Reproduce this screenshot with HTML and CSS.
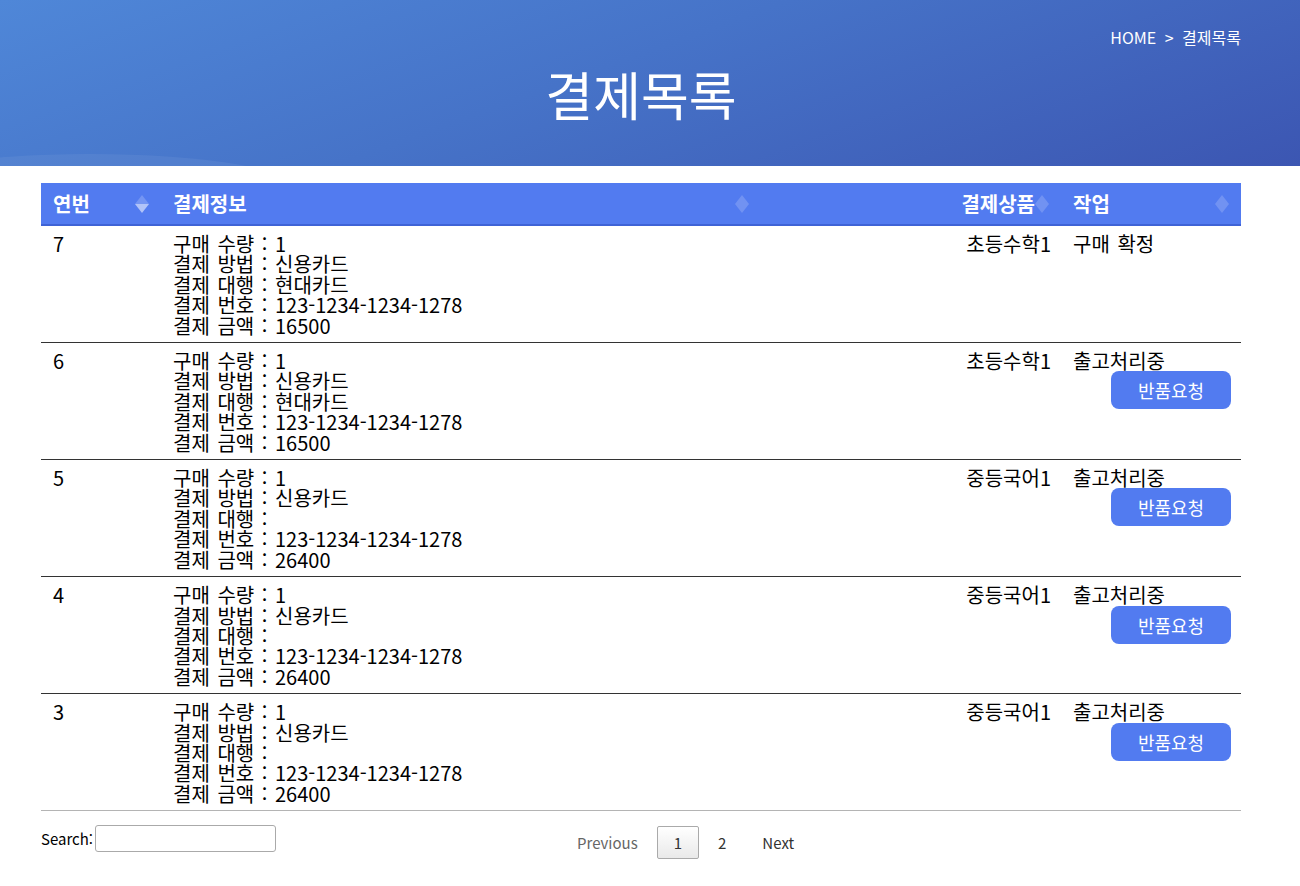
FILE: index.html
```html
<!DOCTYPE html>
<html lang="ko">
<head>
<meta charset="utf-8">
<title>결제목록</title>
<link rel="stylesheet" href="styles.css">
</head>
<body>
<header class="banner">
  <div class="crumb">HOME <span class="sep">&gt;</span> 결제목록</div>
  <h1 class="title">결제목록</h1>
</header>

<main class="wrap">
  <table class="list">
    <colgroup>
      <col class="c1"><col class="c2"><col class="c3"><col class="c4">
    </colgroup>
    <thead>
      <tr>
        <th class="sort desc">연번</th>
        <th class="sort">결제정보</th>
        <th class="sort right">결제상품</th>
        <th class="sort">작업</th>
      </tr>
    </thead>
    <tbody>
      <tr>
        <td>7</td>
        <td>구매 수량 : 1<br>결제 방법 : 신용카드<br>결제 대행 : 현대카드<br>결제 번호 : 123-1234-1234-1278<br>결제 금액 : 16500</td>
        <td class="right">초등수학1</td>
        <td>구매 확정</td>
      </tr>
      <tr>
        <td>6</td>
        <td>구매 수량 : 1<br>결제 방법 : 신용카드<br>결제 대행 : 현대카드<br>결제 번호 : 123-1234-1234-1278<br>결제 금액 : 16500</td>
        <td class="right">초등수학1</td>
        <td>출고처리중<div class="act"><button class="btn">반품요청</button></div></td>
      </tr>
      <tr>
        <td>5</td>
        <td>구매 수량 : 1<br>결제 방법 : 신용카드<br>결제 대행 : <br>결제 번호 : 123-1234-1234-1278<br>결제 금액 : 26400</td>
        <td class="right">중등국어1</td>
        <td>출고처리중<div class="act"><button class="btn">반품요청</button></div></td>
      </tr>
      <tr>
        <td>4</td>
        <td>구매 수량 : 1<br>결제 방법 : 신용카드<br>결제 대행 : <br>결제 번호 : 123-1234-1234-1278<br>결제 금액 : 26400</td>
        <td class="right">중등국어1</td>
        <td>출고처리중<div class="act"><button class="btn">반품요청</button></div></td>
      </tr>
      <tr class="last">
        <td>3</td>
        <td>구매 수량 : 1<br>결제 방법 : 신용카드<br>결제 대행 : <br>결제 번호 : 123-1234-1234-1278<br>결제 금액 : 26400</td>
        <td class="right">중등국어1</td>
        <td>출고처리중<div class="act"><button class="btn">반품요청</button></div></td>
      </tr>
    </tbody>
  </table>

  <div class="foot">
    <label class="search">Search:<input type="search" class="search-input"></label>
    <nav class="pager">
      <span class="pg disabled">Previous</span>
      <span class="pg current">1</span>
      <span class="pg">2</span>
      <span class="pg">Next</span>
    </nav>
  </div>
</main>
</body>
</html>
```
FILE: styles.css
```css
* { box-sizing: border-box; }
html, body { margin: 0; padding: 0; background: #fff; }
body {
  font-family: "Noto Sans CJK KR", "Open Sans", sans-serif;
  color: #000;
}

.banner {
  position: relative;
  height: 166px;
  background: linear-gradient(160deg, #4f87d8 0%, #4673c8 45%, #3c56b2 100%);
  color: #fff;
  overflow: hidden;
  padding: 0 59px 0 0;
  display: flex;
  flex-direction: column;
}
.banner::after {
  content: "";
  position: absolute;
  left: -120px;
  bottom: -60px;
  width: 420px;
  height: 72px;
  border-radius: 50%;
  background: rgba(255,255,255,0.06);
}
.crumb {
  align-self: flex-end;
  margin-top: 26px;
  font-size: 16px;
  line-height: 22px;
  letter-spacing: 0;
}
.crumb .sep { margin: 0 4px; }
.title {
  margin: 14px 0 0 41px;
  text-align: center;
  font-size: 52px;
  font-weight: 400;
  line-height: 64px;
  letter-spacing: 0;
}

.wrap {
  width: 1200px;
  margin: 17px 0 0 41px;
}

.list {
  width: 1200px;
  border-collapse: collapse;
  table-layout: fixed;
}
.c1 { width: 120px; }
.c2 { width: 600px; }
.c3 { width: 300px; }
.c4 { width: 180px; }

.list thead th {
  background: #527bf0;
  color: #fff;
  font-size: 20px;
  font-weight: 700;
  text-align: left;
  height: 42px;
  padding: 0 30px 0 12px;
  border-bottom: 2px solid #3f63d6;
  position: relative;
}
.list thead th.right { text-align: right; padding-right: 26px; }
.sort::before, .sort::after {
  content: "";
  position: absolute;
  right: 12px;
  width: 0; height: 0;
  border-left: 7px solid transparent;
  border-right: 7px solid transparent;
}
.sort::before {
  top: 12px;
  border-bottom: 9px solid rgba(255,255,255,0.18);
}
.sort::after {
  top: 21px;
  border-top: 9px solid rgba(255,255,255,0.18);
}
.sort.desc::before { border-bottom-color: rgba(255,255,255,0.2); }
.sort.desc::after { border-top-color: rgba(255,255,255,0.55); }

.list tbody td {
  font-size: 20px;
  line-height: 20.4px;
  word-spacing: 2px;
  padding: 8px 10px 6px 12px;
  vertical-align: top;
  border-bottom: 1px solid #333;
}
.list tbody tr.last td { border-bottom-color: #b4b4b4; }
.list tbody td.right { text-align: right; }

.act {
  display: flex;
  justify-content: flex-end;
}
.btn {
  font-family: inherit;
  font-size: 18px;
  color: #fff;
  background: #527bf0;
  border: 0;
  border-radius: 8px;
  width: 120px;
  height: 38px;
  padding: 0;
}

.foot {
  display: flex;
  align-items: flex-start;
  margin-top: 14px;
}
.search {
  width: 519px;
  font-size: 15px;
  display: flex;
  align-items: center;
  height: 27px;
}
.search-input {
  margin-left: 2px;
  width: 181px;
  height: 27px;
  border: 1px solid #aaa;
  border-radius: 3px;
  padding: 2px 4px;
  font: inherit;
}
.pager {
  display: flex;
  margin-top: 1px;
}
.pg {
  font-size: 15px;
  line-height: 21px;
  padding: 5px 16px;
  border: 1px solid transparent;
  border-radius: 2px;
  margin-left: 2px;
  color: #333;
}
.pg:first-child { margin-left: 0; }
.pg.disabled { color: #666; }
.pg.current {
  border-color: #aaa;
  background: linear-gradient(#fff, #e9e9e9);
  color: #333;
}
```
